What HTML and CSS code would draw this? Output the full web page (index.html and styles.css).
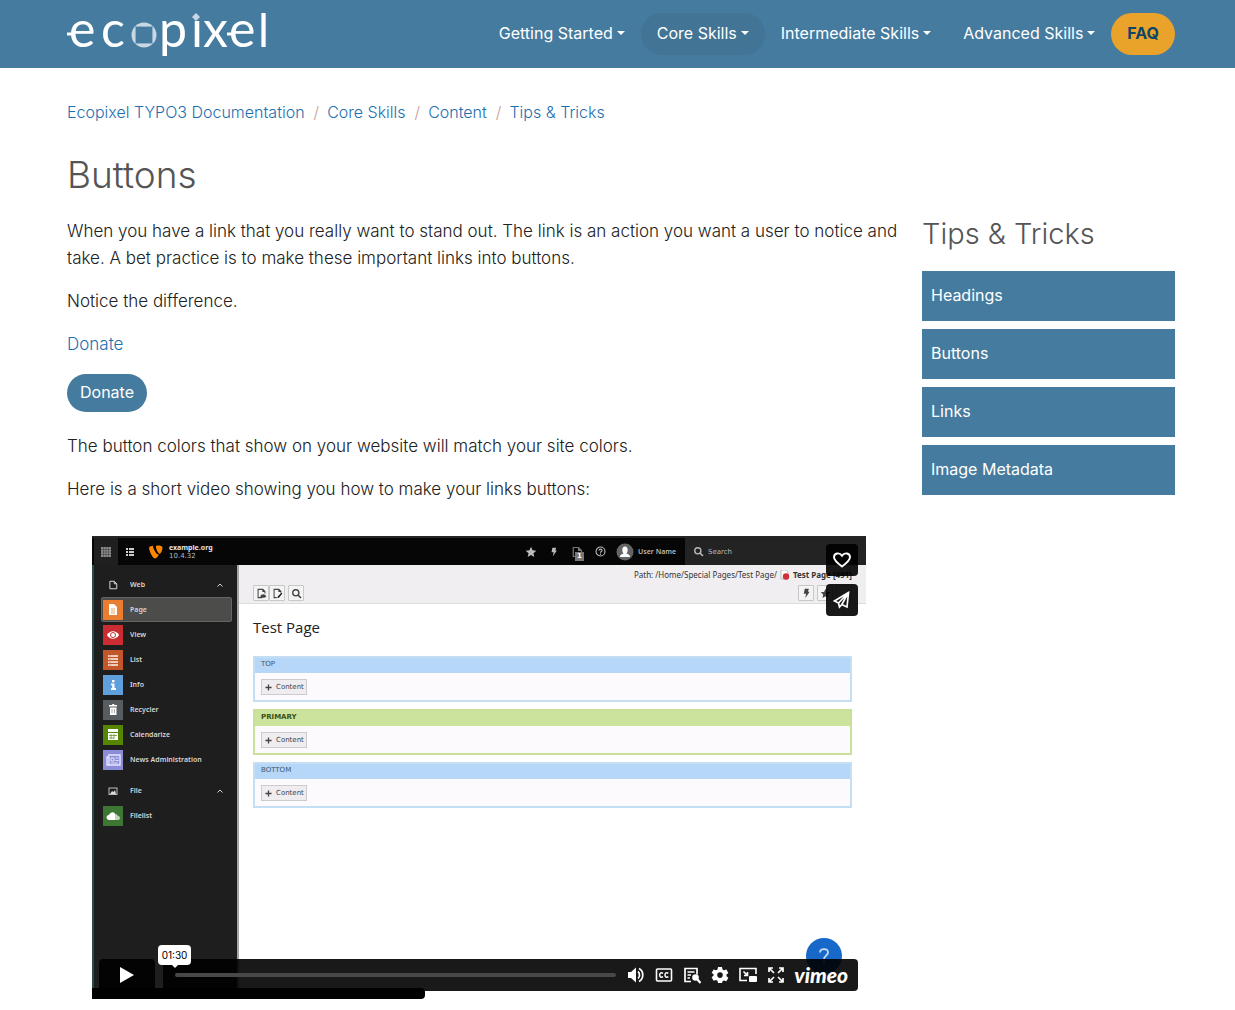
FILE: index.html
```html
<!DOCTYPE html>
<html lang="en">
<head>
<meta charset="utf-8">
<meta name="viewport" content="width=device-width, initial-scale=1">
<title>Buttons - Ecopixel TYPO3 Documentation</title>
<link rel="stylesheet" href="styles.css">
</head>
<body>
<svg class="defs" width="0" height="0" aria-hidden="true">
  <symbol id="doc" viewBox="0 0 16 16"><path d="M3 2h7l4 4v8H3z M10 2v4h4" fill="none" stroke="currentColor" stroke-width="1.6"/></symbol>
  <symbol id="star" viewBox="0 0 16 16"><path fill="currentColor" d="M8 1l2.1 4.7 5 .5-3.800 3.400 1.100 5L8 12.100 3.600 14.600l1.100-5L.9 6.200l5-.5z"/></symbol>
  <symbol id="bolt" viewBox="0 0 16 16"><path fill="currentColor" d="M5.500 1h6L10 5.500h2.500L6 15l1.500-6.500H4z"/></symbol>
  <symbol id="search" viewBox="0 0 16 16"><circle cx="7" cy="7" r="4.500" fill="none" stroke="currentColor" stroke-width="2"/><path d="M10.500 10.500L14.500 14.500" stroke="currentColor" stroke-width="2.400"/></symbol>
  <symbol id="chev" viewBox="0 0 16 16"><path d="M3 11l5-5 5 5" fill="none" stroke="currentColor" stroke-width="2"/></symbol>
  <symbol id="plus" viewBox="0 0 16 16"><path d="M8 1v14M1 8h14" stroke="currentColor" stroke-width="3"/></symbol>
</svg>

<header class="site-header">
  <div class="wrap bar">
    <a class="logo" href="#" aria-label="ecopixel">
      <svg width="204" height="68" viewBox="0 -12 204 68">
        <g class="logo-text">
          <text x="2" y="35">e</text><text x="34" y="35">c</text><text x="92" y="35">p</text><text x="124" y="35">ı</text><text x="136" y="35">x</text><text x="162" y="35">e</text><text class="tall" x="191" y="35">l</text>
        </g>
        <path d="M0 22h6M160 22h7" stroke="#fff" stroke-width="3"/>
        <circle cx="77" cy="23" r="12.500" fill="#c8d7e3"/>
        <rect x="68.500" y="14.500" width="17" height="17" fill="#457b9f" stroke="#8fb0c6"/>
        <path d="M129 1l4 4-4 4-4-4z" fill="#c8d7e3"/>
      </svg>
    </a>
    <nav class="main-nav" aria-label="Main">
      <a href="#">Getting Started<i class="caret"></i></a>
      <a href="#" class="active">Core Skills<i class="caret"></i></a>
      <a href="#">Intermediate Skills<i class="caret"></i></a>
      <a href="#">Advanced Skills<i class="caret"></i></a>
      <a href="#" class="faq">FAQ</a>
    </nav>
  </div>
</header>

<div class="wrap">
  <nav aria-label="Breadcrumb">
    <ol class="crumbs">
      <li><a href="#">Ecopixel TYPO3 Documentation</a></li>
      <li><a href="#">Core Skills</a></li>
      <li><a href="#">Content</a></li>
      <li><a href="#">Tips &amp; Tricks</a></li>
    </ol>
  </nav>
  <h1>Buttons</h1>
  <div class="columns">
    <main>
      <p>When you have a link that you really want to stand out. The link is an action you want a user to notice and take. A bet practice is to make these important links into buttons.</p>
      <p>Notice the difference.</p>
      <p><a href="#">Donate</a></p>
      <div class="cta"><a class="btn" href="#">Donate</a></div>
      <p>The button colors that show on your website will match your site colors.</p>
      <p>Here is a short video showing you how to make your links buttons:</p>

      <section class="video" aria-label="Video player">
        <div class="t3-top">
          <span class="t3-grid"><svg width="10" height="10" viewBox="0 0 10 10"><rect width="10" height="10" fill="#8b8b8b"/><path d="M0 2.500h10M0 5h10M0 7.500h10M2.500 0v10M5 0v10M7.500 0v10" stroke="#444" stroke-width=".6"/></svg></span>
          <svg class="t3-list" width="8" height="8" viewBox="0 0 8 8"><path d="M0 1h2M3 1h5M0 4h2M3 4h5M0 7h2M3 7h5" stroke="#ccc" stroke-width="2"/></svg>
          <svg class="t3-logo" width="14" height="14" viewBox="0 0 14 14"><path fill="#ff8700" d="M10 9.500c-.3.100-.5.100-.700.100C7 9.600 4 2.500 4 1.500c0-.4.100-.6.300-.7C2.500 1 .9 1.500.4 2.100c-.2.300-.3.600-.3 1C.1 5.600 3.500 13.500 6 13.500c1.200 0 3-1.800 4-4zM8.500.6c2.500 0 5 .4 5 1.800 0 2.900-1.800 6.300-2.800 6.300C9 8.700 7 4.200 7 1.800 7 .8 7.500.6 8.500.6z"/></svg>
          <div class="t3-site"><b>example.org</b><span>10.4.32</span></div>
          <div class="t3-tools">
            <svg width="12" height="12"><use href="#star"/></svg>
            <svg width="10" height="10"><use href="#bolt"/></svg>
            <span class="t3-docs"><svg width="12" height="12"><use href="#doc"/></svg><b>1</b></span>
            <svg width="11" height="11" viewBox="0 0 16 16"><circle cx="8" cy="8" r="6.500" fill="none" stroke="currentColor" stroke-width="1.600"/><path d="M5.800 6.500C6 3.800 10.200 4 10.200 6.400 10.200 8 8 8 8 9.800M8 11v1.600" fill="none" stroke="currentColor" stroke-width="1.600"/></svg>
          </div>
          <div class="t3-user"><svg width="18" height="18" viewBox="0 0 18 18"><circle cx="9" cy="9" r="8.500" fill="#646464"/><ellipse cx="9" cy="7" rx="2.700" ry="3.500" fill="#fff"/><path d="M4 14c0-3 3-3 4-4h2c1 1 4 1 4 4z" fill="#fff"/></svg>User Name</div>
          <label class="t3-search"><svg width="11" height="11"><use href="#search"/></svg><input type="text" placeholder="Search" aria-label="Search"></label>
        </div>
        <div class="t3-body">
          <div class="t3-menu">
            <div class="group"><svg width="10" height="10"><use href="#doc"/></svg>Web<svg class="up" width="8" height="8"><use href="#chev"/></svg></div>
            <a href="#" class="current"><i class="c-page"><svg viewBox="0 0 20 20"><path d="M6 4h5l3 3v8H6z" fill="#fff"/><path d="M8 9h4M8 11h4M8 13h4" fill="none" stroke="#f0a56b"/></svg></i>Page</a>
            <a href="#"><i class="c-view"><svg viewBox="0 0 20 20"><path d="M4 10c3-5 9-5 12 0-3 5-9 5-12 0z" fill="#fff"/><circle cx="10" cy="10" r="2.500" fill="none" stroke="#c83232"/></svg></i>View</a>
            <a href="#"><i class="c-list"><svg viewBox="0 0 20 20"><path d="M5 6h10M5 9h10M5 12h10M5 15h10" stroke="#f0cdbb" stroke-width="2"/><path d="M7 5v11" stroke="#c8713f" stroke-width=".6"/></svg></i>List</a>
            <a href="#"><i class="c-info"><svg viewBox="0 0 20 20"><path d="M9 5h2.500v2.200H9zM8 8.500h3.500V13H13v2H8v-2h1.200v-2.700H8z" fill="#fff"/></svg></i>Info</a>
            <a href="#"><i class="c-bin"><svg viewBox="0 0 20 20"><path d="M6 5h3l.5-1h1.500l.5 1H14v1.500H6zM7 7.500h6.500V15H7z" fill="#fff"/><path d="M9 9v4M11.500 9v4" stroke="#aaa"/></svg></i>Recycler</a>
            <a href="#"><i class="c-cal"><svg viewBox="0 0 20 20"><path d="M5 4h10v3H5zM5 8h10v7H5z" fill="#fff"/><path d="M6 10.500h8M6 13h5M8 9v5M11 9v5" stroke="#5c8a10" stroke-width=".7"/></svg></i>Calendarize</a>
            <a href="#"><i class="c-news"><svg viewBox="0 0 20 20"><path d="M5 5h12v10H4V7h2v8" fill="none" stroke="#e7e7ff" stroke-width="1.400"/><path d="M8 8h3v3H8zM12.500 8h3M12.500 10.500h3M8 13h7" fill="none" stroke="#e7e7ff"/></svg></i>News Administration</a>
            <div class="group second"><svg width="10" height="10" viewBox="0 0 10 10"><rect x="1" y="2" width="8" height="6.500" fill="none" stroke="#bbb"/><path d="M2 8l2-3 1.500 1L7 4l1 4z" fill="#ddd"/></svg>File<svg class="up" width="8" height="8"><use href="#chev"/></svg></div>
            <a href="#"><i class="c-file"><svg viewBox="0 0 20 20"><path d="M6 14a2.500 2.500 0 010-5 3.500 3.500 0 016-1.500V14z" fill="#fff"/><path d="M12 8a3 3 0 013 2 2 2 0 010 4h-3z" fill="#c3d6bd"/></svg></i>Filelist</a>
          </div>
          <div class="t3-main">
            <div class="t3-head">
              <div class="t3-path">Path: /Home/Special Pages/Test Page/ <svg width="10" height="10" viewBox="0 0 10 10"><path d="M1 0h5l2 2v7H1z" fill="#fff" stroke="#999" stroke-width=".6"/><circle cx="6" cy="6.500" r="3.200" fill="#cf2e3a"/></svg> <b>Test Page [491]</b></div>
              <div class="t3-btns">
                <button aria-label="View page"><svg width="11" height="11" viewBox="0 0 16 16"><path d="M9 14H3V2h7l3 3v3M10 2v3h3" fill="none" stroke="currentColor" stroke-width="1.500"/><path d="M6 12c2-4 7-4 9 0-2 3-7 3-9 0z" fill="currentColor"/></svg></button><button aria-label="Edit page"><svg width="11" height="11" viewBox="0 0 16 16"><path d="M7 14H3V2h7l3 3v2M10 2v3h3" fill="none" stroke="currentColor" stroke-width="1.500"/><path d="M15 8l-5 6-2 1 .500-2.500L13.500 7z" fill="#111"/></svg></button><button aria-label="Find" class="gap"><svg width="11" height="11"><use href="#search"/></svg></button>
                <button aria-label="Clear cache" class="push"><svg width="11" height="11"><use href="#bolt"/></svg></button><button aria-label="Bookmark" class="gap"><svg width="11" height="11"><use href="#star"/></svg></button><button aria-label="Help" class="gap"></button>
              </div>
            </div>
            <h2>Test Page</h2>
            <div class="zone"><h3>TOP</h3><button><svg width="7" height="7"><use href="#plus"/></svg>Content</button></div>
            <div class="zone green"><h3>PRIMARY</h3><button><svg width="7" height="7"><use href="#plus"/></svg>Content</button></div>
            <div class="zone"><h3>BOTTOM</h3><button><svg width="7" height="7"><use href="#plus"/></svg>Content</button></div>
          </div>
        </div>
        <div class="help-dot"><svg width="36" height="36" viewBox="0 0 36 36"><path d="M14 14.500c.3-4.500 8-4.300 8 0 0 3-4 3.200-4 6.500M18 23v2.500" fill="none" stroke="#c7dcf5" stroke-width="1.800"/></svg></div>
        <div class="side-actions">
          <button aria-label="Like"><svg width="20" height="20" viewBox="0 0 20 20"><path d="M10 16.500C6 13.500 2 10.500 2 7.200 2 3 7.500 2 10 5.800 12.500 2 18 3 18 7.200c0 3.300-4 6.300-8 9.300z" fill="none" stroke="#fff" stroke-width="1.900"/></svg></button>
          <button aria-label="Share"><svg width="20" height="20" viewBox="0 0 20 20"><path d="M16.500 2.500L2.500 11l4 2 1 4 2.300-2.500 5.200 2.500zM6.500 13l10-10.500L9.800 14.500" fill="none" stroke="#fff" stroke-width="1.700"/></svg></button>
        </div>
        <div class="progress-strip"></div>
        <div class="controls">
          <button class="play" aria-label="Play"><svg width="16" height="18" viewBox="0 0 16 18"><path d="M1 1v16l14-8z" fill="#fff"/></svg></button>
          <div class="control-bar">
            <input class="seek" type="range" min="0" max="90" value="0" aria-label="Seek">
            <output class="time">01:30</output>
            <button aria-label="Volume"><svg viewBox="0 0 20 20"><path d="M2 7h3l5-4.500v15L5 13H2z" fill="#fff"/><path d="M12 6.500c2 1.500 2 5.500 0 7M13 3.500c5 2.500 5 10.500 0 13" fill="none" stroke="#fff" stroke-width="1.700"/></svg></button>
            <button aria-label="Captions"><svg viewBox="0 0 20 20"><rect x="2.500" y="4" width="15" height="12" rx="1" fill="none" stroke="#fff" stroke-width="1.600"/><path d="M9 8.300c-1.500-1.200-3.300-.5-3.300 1.700s1.800 2.900 3.300 1.700M14.300 8.300c-1.500-1.200-3.300-.5-3.300 1.700s1.800 2.900 3.300 1.700" fill="none" stroke="#fff" stroke-width="1.500"/></svg></button>
            <button aria-label="Transcript"><svg viewBox="0 0 20 20"><path d="M9 16.500H3v-13h12v6M5.500 7h7M5.500 10H9M5.500 13H8" fill="none" stroke="#fff" stroke-width="1.700"/><circle cx="13.500" cy="12.500" r="3.300" fill="#fff"/><path d="M15 14l3.500 4" stroke="#fff" stroke-width="2.200"/></svg></button>
            <button aria-label="Settings"><svg viewBox="0 0 20 20"><path fill="#fff" fill-rule="evenodd" d="M8 2h4l.5 2.500 1.500.8 2.400-.9 2 3.500-1.900 1.600v1.800l1.900 1.500-2 3.500-2.400-.9-1.500.9L12 18H8l-.5-2.200-1.500-.9-2.400.9-2-3.500 1.900-1.500V9L1.600 7.900l2-3.500 2.400.9 1.500-.8zM10 7.300a2.800 2.800 0 100 5.600 2.800 2.800 0 000-5.600z"/></svg></button>
            <button aria-label="Picture in picture"><svg viewBox="0 0 20 20"><path d="M9 15.500H2v-12h16V9M5.500 6.500l4 4M9.500 7v3.500H6" fill="none" stroke="#fff" stroke-width="1.600"/><rect x="11" y="11" width="8" height="6" rx="1" fill="#fff"/></svg></button>
            <button aria-label="Fullscreen"><svg viewBox="0 0 20 20"><path d="M3 7V3h4M13 3h4v4M17 13v4h-4M7 17H3v-4M3.500 3.500L8 8M16.500 3.500L12 8M3.500 16.500L8 12M16.500 16.500L12 12" fill="none" stroke="#fff" stroke-width="1.700"/></svg></button>
            <a class="vimeo" href="#">vimeo</a>
          </div>
        </div>
      </section>
    </main>
    <aside>
      <h2>Tips &amp; Tricks</h2>
      <nav class="side-nav" aria-label="Tips and Tricks">
        <a href="#">Headings</a>
        <a href="#">Buttons</a>
        <a href="#">Links</a>
        <a href="#">Image Metadata</a>
      </nav>
    </aside>
  </div>
</div>
</body>
</html>
```
FILE: styles.css
```css
* { box-sizing: border-box; }
body { margin: 0; font: 300 16px/27px Inter, "Liberation Sans", sans-serif; color: #212529; background: #fff; }
a { color: #1d6fb0; text-decoration: none; }
button { font: inherit; padding: 0; border: 0; background: none; color: inherit; }
h1, h2, h3, p, ol { margin: 0; padding: 0; }
svg { display: block; }
.defs { position: absolute; }
.wrap { padding: 0 60px 0 67px; }

.site-header { background: #457b9f; }
.bar { display: flex; justify-content: space-between; min-height: 68px; }
.logo svg { overflow: visible; }
.logo-text { font: 400 50px/50px Lato, sans-serif; fill: #fff; }
.logo-text .tall { font-size: 46px; }
.main-nav { display: flex; align-items: center; }
.main-nav a { display: flex; align-items: center; height: 42px; padding: 0 16px 2px; border-radius: 21px; color: #fff; font-weight: 400; white-space: nowrap; }
.main-nav .active { background: #417495; }
.main-nav .faq { background: #e9a32b; color: #0f4468; font-weight: 700; }
.caret { margin-left: 4px; border: 4px solid transparent; border-top-color: #fff; border-bottom: 0; }

.crumbs { display: flex; list-style: none; padding-top: 31px; }
.crumbs li + li::before { content: "/"; padding: 0 8px 0 9px; color: #c99; }
h1 { margin-top: 26px; font-size: 37px; line-height: 45px; font-weight: 300; color: #555; }
.columns { display: grid; grid-template-columns: minmax(0, 1fr) 253px; gap: 24px; padding-top: 21px; }
main p { margin-bottom: 16px; font-size: 17px; color: #212121; }
.cta { display: flex; margin-bottom: 21px; }
.btn { height: 38px; padding: 0 13px; border-radius: 19px; background: #457b9f; color: #fff; font-weight: 400; line-height: 37px; }
aside h2 { font-size: 29px; line-height: 32px; font-weight: 300; color: #555; }
.side-nav { display: grid; gap: 8px; margin-top: 21px; }
.side-nav a { height: 50px; padding: 0 9px; background: #457b9f; color: #fff; font-weight: 400; line-height: 49px; }

/* Video still */
.video { position: relative; display: flex; flex-direction: column; margin: 33px 32px 12px 25px; aspect-ratio: 774 / 463; border-top: 2px solid #252525; overflow: hidden; font: 400 7px/10px "DejaVu Sans", sans-serif; }
.t3-top { display: flex; align-items: center; flex: none; height: 27px; background: #060606; color: #bbb; padding-left: 2px; }
.t3-grid { display: grid; place-items: center; align-self: stretch; width: 24px; background: #1f1f1f; }
.t3-list { margin-left: 8px; }
.t3-logo { margin-left: 15px; }
.t3-site { display: grid; flex: 1; margin-left: 6px; line-height: 9px; }
.t3-site b { color: #e6e6e6; font-family: "Noto Sans", sans-serif; }
.t3-tools { display: flex; align-items: center; gap: 12px; margin-right: 10px; }
.t3-docs { position: relative; color: #777; }
.t3-docs b { position: absolute; left: 4px; top: 6px; width: 9px; height: 9px; background: #777; color: #fff; text-align: center; line-height: 9px; }
.t3-user { display: flex; align-items: center; gap: 4px; width: 69px; white-space: nowrap; font-family: "Noto Sans", sans-serif; font-weight: 600; }
.t3-search { display: flex; align-items: center; gap: 4px; align-self: stretch; width: 181px; padding-left: 8px; background: #232323; }
.t3-search input { width: 70px; padding: 0; border: 0; background: none; font: inherit; }
.t3-search input::placeholder { color: #bbb; opacity: 1; }
.t3-body { display: flex; flex: 1; min-height: 0; }
.t3-menu { flex: none; width: 147px; padding: 7px 5px 0 7px; background: #1e1e1e; border-left: 2px solid #2b4a4e; border-right: 2px solid #a5a5a5; font-family: "Noto Sans", sans-serif; font-weight: 600; color: #d6d6d6; }
.t3-menu .group { display: flex; align-items: center; gap: 12px; height: 25px; padding: 0 8px 0 7px; }
.t3-menu .second { margin-top: 6px; }
.t3-menu .up { margin-left: auto; }
.t3-menu a { display: flex; align-items: center; gap: 7px; height: 25px; padding-left: 1px; color: #d6d6d6; border: 1px solid transparent; border-radius: 2px; white-space: nowrap; }
.t3-menu .current { background: #4c4c4b; border-color: #646464; }
.t3-menu i { width: 20px; height: 20px; }
.c-page { background: #ea7d30; } .c-view { background: #c92d32; } .c-list { background: #c2572b; } .c-info { background: #5e9fdc; }
.c-bin { background: #575c60; } .c-cal { background: #568600; } .c-news { background: #8b8dd6; } .c-file { background: #3d7733; }
.t3-main { flex: 1; min-width: 0; background: #fff; }
.t3-head { height: 39px; padding: 5px 14px 0; background: #f0eef0; border-bottom: 1px solid #ddd; color: #333; }
.t3-path { display: flex; justify-content: flex-end; gap: 3px; white-space: nowrap; font: 400 8px/10px "Noto Sans", sans-serif; }
.t3-btns { display: flex; margin-top: 5px; }
.t3-btns button { display: grid; place-items: center; width: 16px; height: 16px; border: 1px solid #c8c8c8; border-radius: 1px; background: #f4f4f4; color: #444; }
.t3-btns .gap { margin-left: 3px; }
.t3-btns .push { margin-left: auto; }
.t3-main h2 { margin: 13px 14px 19px; font: 400 15px/20px "Open Sans", sans-serif; color: #222; }
.zone { height: 46px; margin: 0 14px 7px; border: 2px solid #c3def5; background: #fcfafd; }
.zone h3 { height: 15px; padding-left: 6px; background: #b7d7f8; font: 400 7px/13px "DejaVu Sans", sans-serif; color: #456; }
.zone.green { border-color: #c9e09a; }
.zone.green h3 { background: #cbe39b; font-weight: 700; color: #3b5014; }
.zone button { display: flex; align-items: center; gap: 4px; height: 16px; margin: 6px 0 0 6px; padding: 0 2px 0 3px; border: 1px solid #ccc; background: #efedf0; color: #444; }

/* Player overlays */
.help-dot { position: absolute; right: 24px; bottom: 25px; width: 36px; height: 36px; border-radius: 50%; background: #1768c9; }
.side-actions { position: absolute; right: 8px; top: 6px; display: grid; gap: 8px; }
.side-actions button { display: grid; place-items: center; width: 32px; height: 32px; border-radius: 4px; background: rgba(0, 0, 0, .9); }
.progress-strip { position: absolute; left: 0; bottom: 0; width: 43%; height: 11px; border-radius: 0 4px 4px 0; background: #000; }
.controls { position: absolute; left: 7px; right: 8px; bottom: 8px; display: flex; gap: 8px; height: 32px; }
.play { display: grid; place-items: center; width: 56px; border-radius: 4px; background: rgba(0, 0, 0, .9); }
.control-bar { position: relative; display: flex; align-items: center; gap: 8px; flex: 1; padding: 0 10px 0 12px; border-radius: 4px; background: rgba(0, 0, 0, .9); }
.seek { appearance: none; flex: 1; min-width: 0; height: 4px; margin: 0 2px 0 0; border-radius: 2px; background: #484848; }
.seek::-webkit-slider-thumb { appearance: none; width: 0; height: 0; }
.time { position: absolute; left: -5px; top: -14px; width: 33px; height: 20px; border-radius: 4px; background: #fff; color: #000; font: 400 10px/20px Inter, sans-serif; text-align: center; }
.time::after { content: ""; position: absolute; left: 14px; top: 20px; border: 3px solid transparent; border-top-color: #fff; border-bottom: 0; }
.control-bar button, .control-bar button svg { width: 20px; height: 20px; }
.vimeo { color: #fff; font: italic 900 21px/24px Lato, sans-serif; }
```
